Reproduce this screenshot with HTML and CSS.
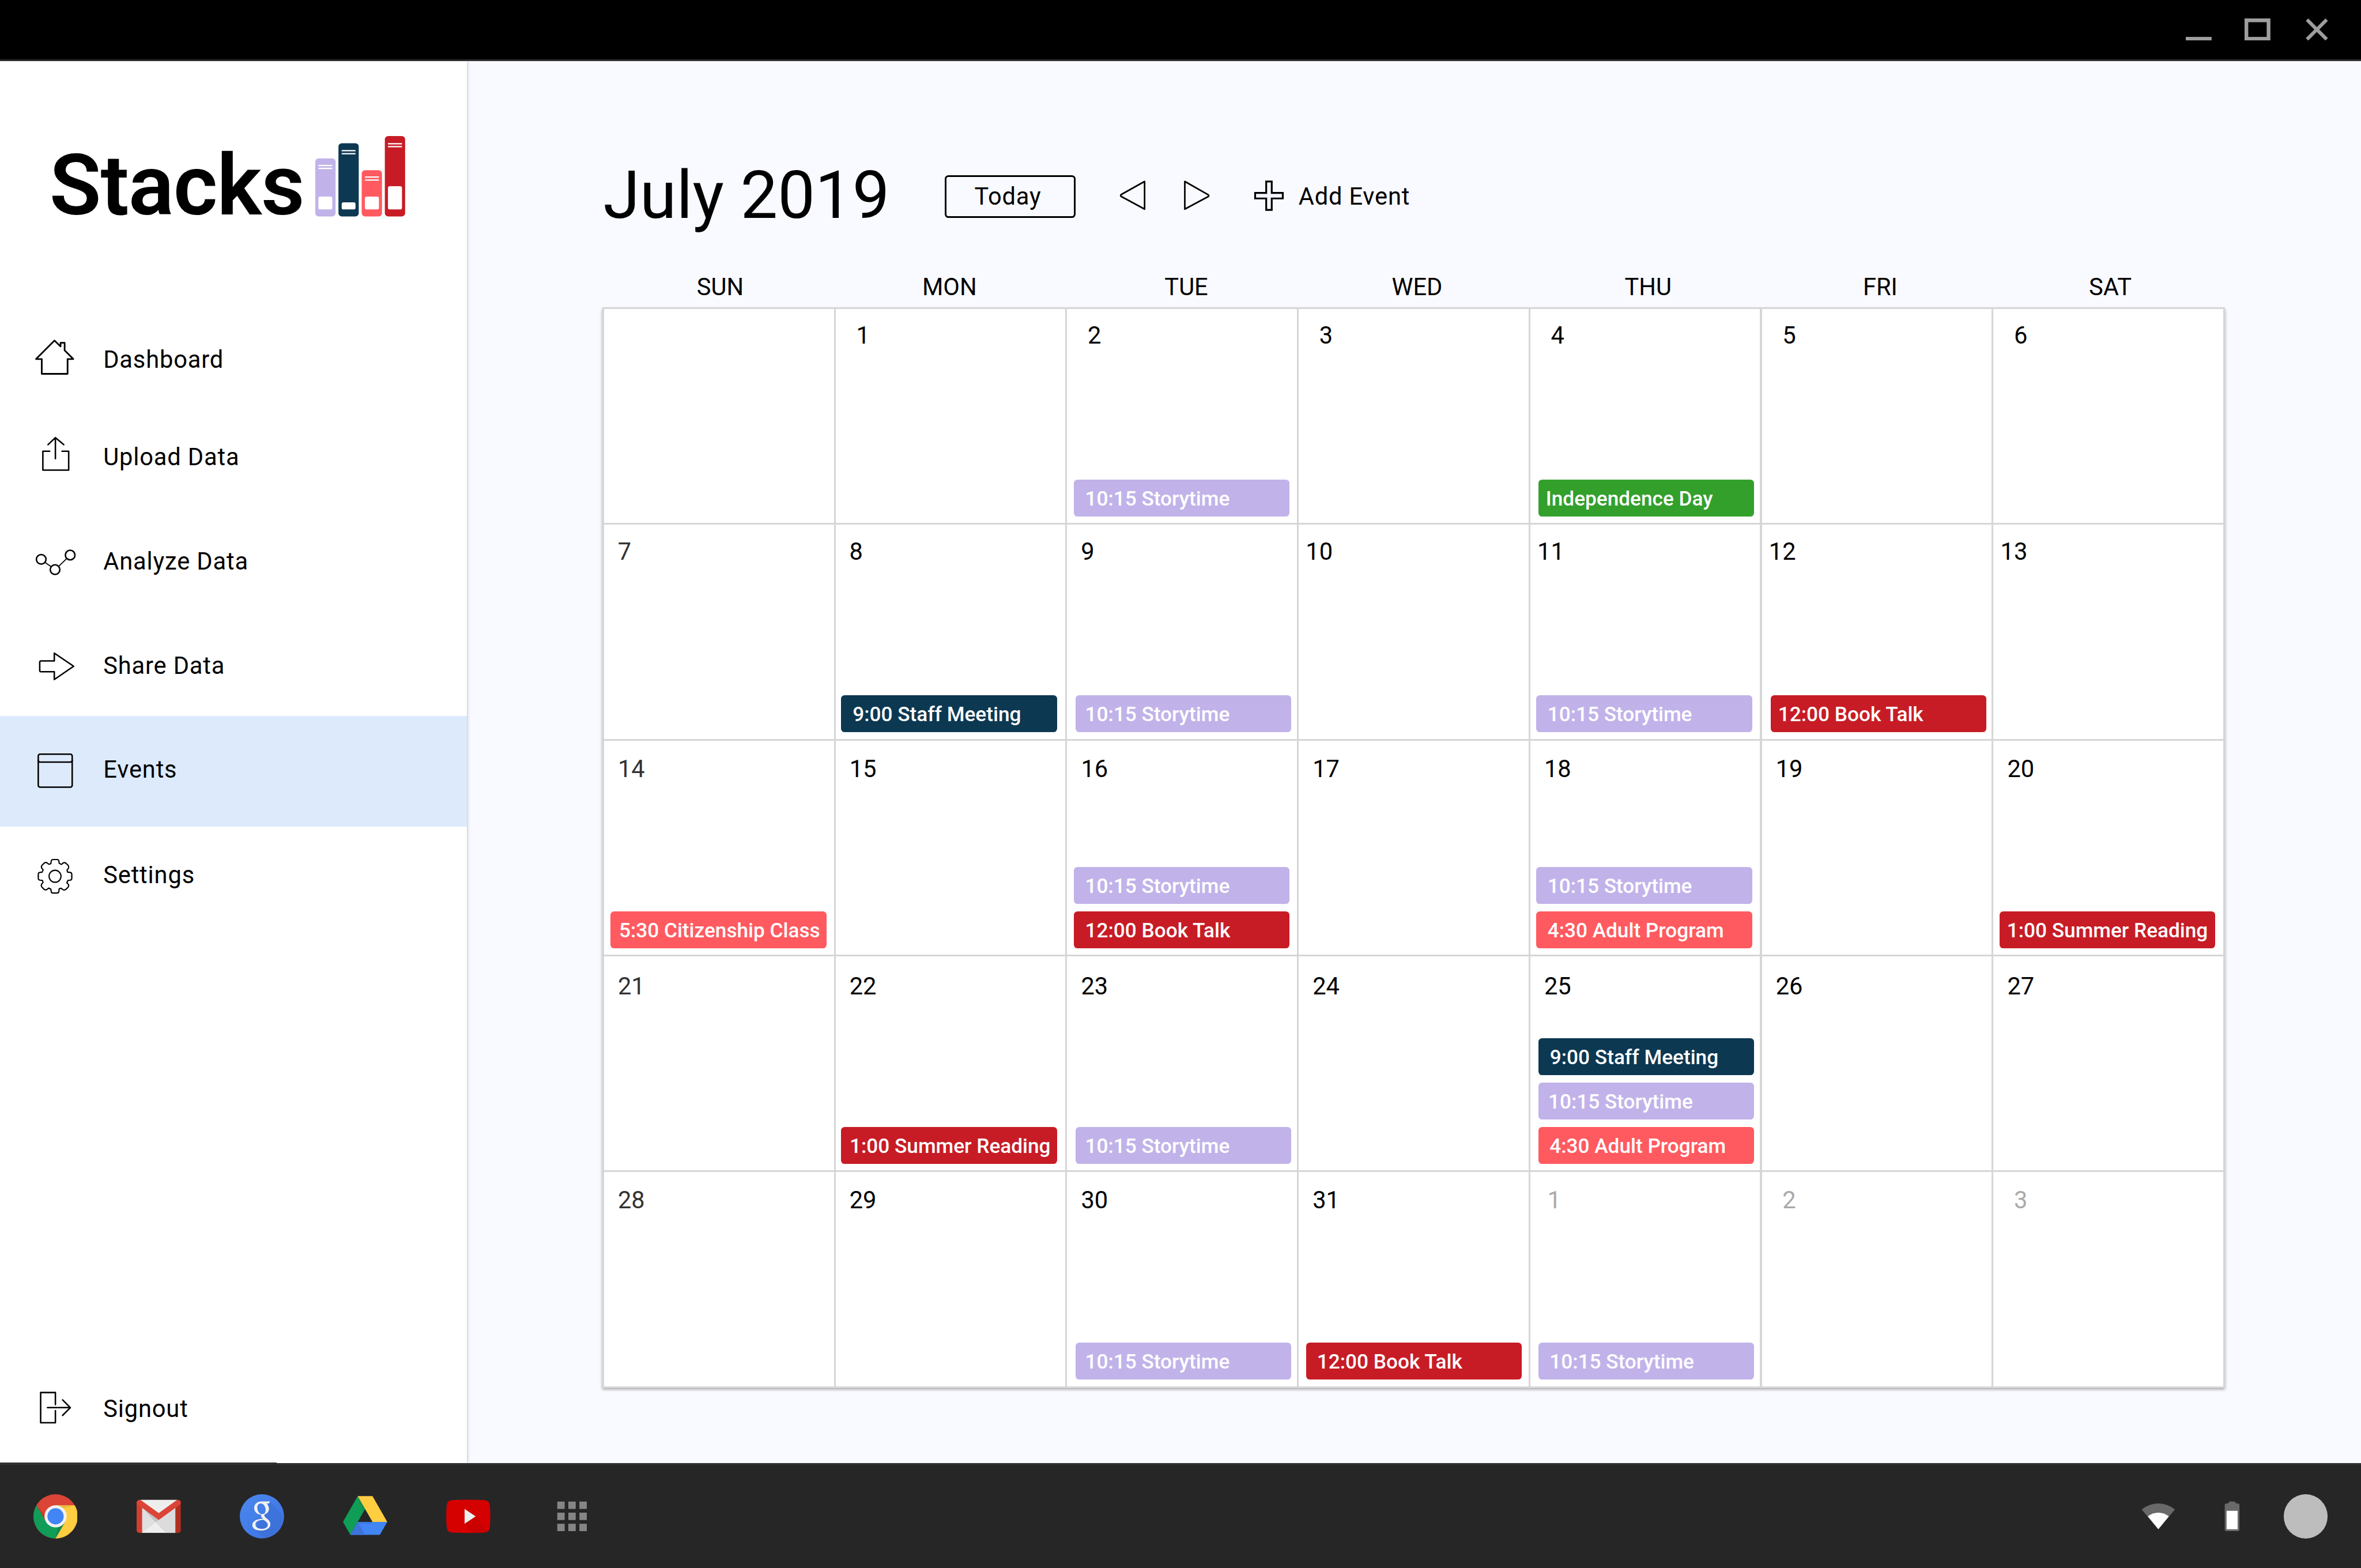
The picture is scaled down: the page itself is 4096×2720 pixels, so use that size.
FILE: index.html
```html
<!DOCTYPE html>
<html lang="en">
<head>
<meta charset="utf-8">
<title>Stacks – Events</title>
<link rel="stylesheet" href="styles.css">
</head>
<body>
<div class="desktop">
  <header class="titlebar">
    <svg class="win-btn" viewBox="0 0 14 12"><path d="M0 10h14v2H0z"/></svg>
    <svg class="win-btn" viewBox="0 0 14 12"><path fill-rule="evenodd" d="M0 0h14v12H0zM2 2v8h10V2z"/></svg>
    <svg class="win-btn" viewBox="0 0 14 12"><path d="M2.35 0 7 4.65 11.65 0 13 1.35 8.35 6 13 10.65 11.65 12 7 7.35 2.35 12 1 10.65 5.65 6 1 1.35z"/></svg>
  </header>

  <div class="app">
    <aside class="sidebar">
      <div class="logo">
        <span class="logo-text">Stacks</span>
        <svg class="logo-books" viewBox="0 0 48.8 43.6">
          <rect x="0" y="12.1" width="11" height="31.5" rx="1.8" fill="#c1b3e9"/>
          <rect x="12.55" y="3.9" width="11" height="39.7" rx="1.8" fill="#0c3852"/>
          <rect x="25.15" y="18.5" width="11" height="25.1" rx="1.8" fill="#ff5a60"/>
          <rect x="37.7" y="0" width="11" height="43.6" rx="1.8" fill="#c71c25"/>
          <g fill="#fff">
            <path d="M1.7 15.6h7.5v.7H1.7zm0 1.6h7.5v.7H1.7zM14.3 7.6h7.5v.7h-7.5zm0 1.6h7.5v.7h-7.5zM26.9 21.9h7.6v.7h-7.6zm0 1.6h7.6v.7h-7.6zM39.4 3.8H47v.7h-7.6zm0 1.6H47v.7h-7.6z"/>
            <rect x="1.7" y="32.8" width="7.5" height="7" rx="1"/>
            <rect x="14.3" y="35.9" width="7.5" height="3.9" rx="1"/>
            <rect x="26.9" y="32.8" width="7.6" height="7" rx="1"/>
            <rect x="39.4" y="27.2" width="7.6" height="12.6" rx="1"/>
          </g>
        </svg>
      </div>

      <nav class="nav">
        <a class="nav-item dashboard">
          <svg class="nav-icon" viewBox="0 0 28 28"><path stroke-width=".9" d="M13.6 3.7 3.6 13.7h3.1v8h14v-8h3.1L19.1 9V4.9h-2.2v2z"/></svg>
          Dashboard</a>
        <a class="nav-item upload">
          <svg class="nav-icon" viewBox="0 0 28 28"><path d="M11 11.2H7.3v10.2h14V11.2h-3.6M14.1 15.2V3.8M10.1 7.6l4-3.8 4.5 3.8"/></svg>
          Upload Data</a>
        <a class="nav-item analyze">
          <svg class="nav-icon" viewBox="0 0 28 28"><circle cx="6.4" cy="13.2" r="2.6"/><circle cx="13.9" cy="18.8" r="2.6"/><circle cx="22.1" cy="10.9" r="2.6"/><path stroke-width=".55" d="m8.5 14.9 3.2 2.2m4.1 0 4.3-4.2"/></svg>
          Analyze Data</a>
        <a class="nav-item share">
          <svg class="nav-icon" viewBox="0 0 28 28"><path d="M6.3 11.7h7.2V7.5L24 14.6l-10.5 7.2v-4.2H6.3q-.7 0-.7-.7v-4.5q0-.7.7-.7z"/></svg>
          Share Data</a>
        <a class="nav-item events active">
          <svg class="nav-icon" viewBox="0 0 28 28"><rect x="4.8" y="5.7" width="18.4" height="17.9" rx="1"/><path d="M4.8 9q0 1 1 1h16.4q1 0 1-1"/></svg>
          Events</a>
        <a class="nav-item settings">
          <svg class="nav-icon" viewBox="0 0 28 28">
            <g transform="translate(13.9 14.7) scale(.0833)" stroke-width="8">
              <circle r="39"/>
              <path id="cog" d="M0-109H14Q24-109 25-99L27-84 42-77 52-86Q62-92 71-85L85-71Q92-62 88-53L78-40 82-27 99-25Q109-23 109-13V0"/>
              <use href="#cog" transform="rotate(90)"/><use href="#cog" transform="rotate(180)"/><use href="#cog" transform="rotate(270)"/>
            </g>
          </svg>
          Settings</a>
      </nav>

      <a class="nav-item signout">
        <svg class="nav-icon" viewBox="0 0 28 28"><path d="M14.1 12V5.5H6.1v16.4h8v-6.6M9.8 13.7H22M18 9.5l4.2 4.2-4.2 4.2"/></svg>
        Signout</a>
    </aside>

    <main class="main">
      <div class="toolbar">
        <h1 class="month">July 2019</h1>
        <button class="today">Today</button>
        <svg class="arrow prev" viewBox="0 0 16 19"><path d="M14.6 1.5v15L1.9 9.6q-.6-.5 0-1z"/></svg>
        <svg class="arrow next" viewBox="0 0 16 19"><path d="M1.4 1.5v15l12.7-6.8q.6-.5 0-1z"/></svg>
        <svg class="plus" viewBox="0 0 18 19"><path d="M7.4 1.5h3v6.2h6v3h-6v6.2h-3v-6.2h-6v-3h6z"/></svg>
        <span class="add-event">Add Event</span>
      </div>

      <div class="weekdays">
        <span class="sun">SUN</span><span class="mon">MON</span><span class="tue">TUE</span><span class="wed">WED</span><span class="thu">THU</span><span class="fri">FRI</span><span class="sat">SAT</span>
      </div>

      <div class="calendar">
        <div class="week w1">
          <div class="day sunday"></div>
          <div class="day"><span class="num">1</span></div>
          <div class="day"><span class="num">2</span><div class="events-list m35"><div class="chip lavender">10:15 Storytime</div></div></div>
          <div class="day"><span class="num">3</span></div>
          <div class="day"><span class="num">4</span><div class="events-list m43"><div class="chip green p37">Independence Day</div></div></div>
          <div class="day"><span class="num">5</span></div>
          <div class="day"><span class="num">6</span></div>
        </div>
        <div class="week w2">
          <div class="day sunday"><span class="num">7</span></div>
          <div class="day"><span class="num">8</span><div class="events-list"><div class="chip navy">9:00 Staff Meeting</div></div></div>
          <div class="day"><span class="num">9</span><div class="events-list m43"><div class="chip lavender p50">10:15 Storytime</div></div></div>
          <div class="day"><span class="num">10</span></div>
          <div class="day"><span class="num">11</span><div class="events-list m33"><div class="chip lavender p58">10:15 Storytime</div></div></div>
          <div class="day"><span class="num">12</span><div class="events-list m48"><div class="chip red p37">12:00 Book Talk</div></div></div>
          <div class="day"><span class="num">13</span></div>
        </div>
        <div class="week w3">
          <div class="day sunday"><span class="num">14</span><div class="events-list m35"><div class="chip coral p43">5:30 Citizenship Class</div></div></div>
          <div class="day"><span class="num">15</span></div>
          <div class="day"><span class="num">16</span><div class="events-list m35"><div class="chip lavender">10:15 Storytime</div><div class="chip red">12:00 Book Talk</div></div></div>
          <div class="day"><span class="num">17</span></div>
          <div class="day"><span class="num">18</span><div class="events-list m33"><div class="chip lavender p58">10:15 Storytime</div><div class="chip coral p58">4:30 Adult Program</div></div></div>
          <div class="day"><span class="num">19</span></div>
          <div class="day"><span class="num">20</span><div class="events-list m33"><div class="chip red p37">1:00 Summer Reading</div></div></div>
        </div>
        <div class="week w4">
          <div class="day sunday"><span class="num">21</span></div>
          <div class="day"><span class="num">22</span><div class="events-list"><div class="chip red p43">1:00 Summer Reading</div></div></div>
          <div class="day"><span class="num">23</span><div class="events-list m43"><div class="chip lavender p50">10:15 Storytime</div></div></div>
          <div class="day"><span class="num">24</span></div>
          <div class="day"><span class="num">25</span><div class="events-list m43"><div class="chip navy">9:00 Staff Meeting</div><div class="chip lavender p50">10:15 Storytime</div><div class="chip coral p58">4:30 Adult Program</div></div></div>
          <div class="day"><span class="num">26</span></div>
          <div class="day"><span class="num">27</span></div>
        </div>
        <div class="week w5">
          <div class="day sunday"><span class="num">28</span></div>
          <div class="day"><span class="num">29</span></div>
          <div class="day"><span class="num">30</span><div class="events-list m43"><div class="chip lavender p50">10:15 Storytime</div></div></div>
          <div class="day"><span class="num">31</span><div class="events-list m38"><div class="chip red p58">12:00 Book Talk</div></div></div>
          <div class="day next-month first"><span class="num">1</span><div class="events-list m43"><div class="chip lavender p58">10:15 Storytime</div></div></div>
          <div class="day next-month"><span class="num">2</span></div>
          <div class="day next-month"><span class="num">3</span></div>
        </div>
      </div>
    </main>
  </div>

  <footer class="shelf">
    <svg class="app-icon" viewBox="0 0 24 24">
      <circle cx="12" cy="12" r="12" fill="#db4437"/>
      <path fill="#c53929" d="M1.65 6 6 13.6V11.2z"/>
      <path fill="#0f9d58" d="M1.65 6 6.8 15 12 18l5.2-3L12 24A12 12 0 0 1 1.65 6z"/>
      <path fill="#108a4d" d="M17.2 15 12 24l1.2-6.1z"/>
      <path fill="#ffcd40" d="M12 6h10.4A12 12 0 0 1 12 24l5.2-9z"/>
      <path fill="#e8ba3b" d="M12 6h10.4l-5.9 1.5z"/>
      <circle cx="12" cy="12" r="6" fill="#f1f1f1"/><circle cx="12" cy="12" r="4.4" fill="#4285f4"/>
    </svg>
    <svg class="app-icon" viewBox="0 0 24 24">
      <defs><clipPath id="mail"><rect y="3" width="24" height="18" rx="1.5"/></clipPath></defs>
      <g clip-path="url(#mail)">
        <path fill="#eee" d="M2 3h20v18H2z"/>
        <path fill="#dfdfdf" d="M3 7.3v13.6l7.3-5.6z"/>
        <path fill="#c4c4c4" d="M3 7.3 12 14l-1.7 1.3z"/>
        <path fill="#dcdcdc" d="m10.3 15.3 1.7-1.4 9-6.6V21h-5z"/>
        <path fill="#d23f31" d="M0 4h3v17H0z"/><path fill="#b03021" d="M21 4h3v17h-3z"/>
        <path fill="none" stroke="#db4437" stroke-width="3" stroke-linecap="round" d="M1.5 4.5 12 12.1l10.5-7.6"/>
      </g>
    </svg>
    <svg class="app-icon" viewBox="0 0 24 24">
      <defs><linearGradient id="sky" x2="1" y2="1"><stop offset="0" stop-color="#4c88ef"/><stop offset="1" stop-color="#3b72e0"/></linearGradient></defs>
      <circle cx="12" cy="12" r="12" fill="url(#sky)"/>
      <path fill="#3a6dd2" d="m16.3 4 7 7.2A11.5 11.5 0 0 1 13 23.5l-4.5-4.3z" opacity=".55"/>
      <g fill="#f1f1f1" fill-rule="evenodd">
        <path d="M11.9 3.9h4.5l-.6 1.1h-1.2C17.1 8 15.6 11.1 12 11.1 9.2 11.1 7.8 9.4 7.8 7.4 7.8 5.4 9.5 3.9 11.9 3.9zM11.4 5C9.9 5 9.4 6.3 9.5 7.6c.1 1.7 1.1 3.2 2.6 3.2 1.3 0 1.9-1 1.9-2.4C14 6.8 12.9 5 11.4 5z"/>
        <path d="M11.7 10.9h1.8c-.4.7-.1 1.2.6 1.8 1.3 1 2.5 1.9 2.5 3.6 0 1.9-2 3.4-5.3 3.4-2.8 0-4.5-1.2-4.5-2.9 0-2.2 2.4-3.4 5.9-3.5-.8-.7-1.5-1.2-1-2.4zM12.4 13.9c-2.4.1-3.9 1-3.9 2.5 0 1.4 1.4 2.4 3.5 2.4 2 0 3.2-.9 3.2-2.2 0-1.1-1-1.9-2.3-2.7z"/>
      </g>
    </svg>
    <svg class="app-icon" viewBox="0 0 24 24">
      <g transform="translate(0 1)">
        <path fill="#0f9d58" d="m8 0 4 7-8 14-4-7z"/><path fill="#11914f" d="m8 0 4 7-1.2 2.1z"/>
        <path fill="#ffcd40" d="M8 0h8l8 14h-8z"/>
        <path fill="#4285f4" d="M8 14h16l-4 7H4z"/><path fill="#3d74dc" d="m8 14 4 7H4z"/><path fill="#3c78de" d="M8 14h8l-.5 1h-7z"/>
      </g>
    </svg>
    <svg class="app-icon" viewBox="0 0 24 24">
      <path fill="#d50000" d="M3.2 3.2Q12 2.8 20.8 3.2 23.4 3.3 23.7 6 24.2 12 23.7 18q-.3 2.7-2.9 2.8-8.8.4-17.6 0Q.6 20.7.3 18-.2 12 .3 6 .6 3.3 3.2 3.2z"/>
      <path fill="#c40000" d="m10 16 6-4 6.5 7.8q-.8.9-1.7 1-3 .2-6 .2z" opacity=".6"/>
      <path fill="#eee" d="m10 8 6 4-6 4z"/>
    </svg>
    <svg class="app-icon" viewBox="0 0 24 24"><path fill="#858585" d="M4 4h4v4H4zm6 0h4v4h-4zm6 0h4v4h-4zM4 10h4v4H4zm6 0h4v4h-4zm6 0h4v4h-4zM4 16h4v4H4zm6 0h4v4h-4zm6 0h4v4h-4z"/></svg>

    <div class="status">
      <svg class="app-icon" viewBox="0 0 24 24"><path fill="#696969" d="M3 8.3Q7 5 12 5t9 3.3L12 19z"/><path fill="#fff" d="M6.3 12Q9 10 12 10t5.7 2L12 19z"/></svg>
      <svg class="app-icon" viewBox="0 0 24 24"><path fill="#696969" d="M9 5h1q0-1 1-1h2q1 0 1 1h1q1 0 1 1v13q0 1-1 1H9q-1 0-1-1V6q0-1 1-1z"/><path fill="#fff" d="M9 9h6v10H9z"/></svg>
      <span class="avatar"></span>
    </div>
  </footer>
</div>
</body>
</html>
```
FILE: styles.css
```css
/* 1rem = one density-independent pixel */
html { font-size: 3.2px; }
* { box-sizing: border-box; }
body {
  margin: 0;
  font-family: Roboto, "Liberation Sans", sans-serif;
  font-size: 13rem;
  color: #000;
  background: #f9faff;
}
svg { display: block; flex: none; }

.desktop { display: flex; flex-direction: column; width: 1280rem; height: 850rem; overflow: hidden; }

.titlebar {
  display: flex; flex: none; align-items: center; justify-content: flex-end;
  gap: 18rem; height: 33rem; padding-right: 17rem;
  background: #000; border-bottom: 1rem solid #303030;
}
.win-btn { width: 14rem; height: 12rem; fill: #9e9e9e; }

.app { display: flex; flex: 1; min-height: 0; background: #f9faff; }

/* Sidebar */
.sidebar {
  display: flex; flex: none; flex-direction: column;
  width: 253.25rem; box-shadow: 0 0 1.8rem rgba(0, 0, 0, .3);
  background: #fff linear-gradient(#303030, #303030) no-repeat left bottom / 150rem 1px;
}
.logo { display: flex; flex: none; align-items: flex-start; height: 135.2rem; padding: 40.9rem 0 0 26.8rem; }
.logo-text { width: 144.1rem; height: 54rem; line-height: 54rem; font-size: 46rem; font-weight: 600; letter-spacing: -.35rem; }
.logo-books { width: 48.8rem; height: 43.6rem; }

.nav-item {
  display: flex; flex: none; align-items: center; gap: 12rem;
  padding: .6rem 0 0 16rem; line-height: 15rem; letter-spacing: .27rem;
}
.nav-icon { width: 28rem; height: 28rem; margin-top: -.6rem; fill: none; stroke: #000; stroke-width: .8; stroke-linejoin: round; stroke-linecap: round; }
.dashboard { height: 53rem; padding-top: .8rem; }
.upload { height: 52.8rem; }
.analyze { height: 60.2rem; }
.share { height: 52.8rem; margin-bottom: 1rem; }
.events { height: 60rem; padding-bottom: 2rem; }
.active { background: #ddeafc; }
.settings { height: 52.4rem; }
.signout { height: 28.8rem; margin: auto 0 15.2rem; }

/* Main */
.main { flex: 1; padding: 55rem 0 0 73.75rem; }
.toolbar { display: flex; align-items: center; height: 37rem; }
.month { width: 185.1rem; margin: 0; padding-bottom: 1.6rem; font-size: 36rem; font-weight: 400; line-height: 36rem; white-space: nowrap; }
.today {
  width: 71rem; height: 23rem; padding: 0 2.4rem 0 0; border: 1rem solid #000; border-radius: 2rem;
  background: transparent; font: inherit; letter-spacing: .26rem; color: inherit;
}
.arrow { width: 16rem; height: 19rem; fill: none; stroke: #000; stroke-width: .85; stroke-linejoin: round; }
.prev { margin-left: 23rem; }
.next { margin-left: 19rem; }
.plus { width: 18rem; height: 19rem; margin-left: 22rem; fill: #f4f4ff; stroke: #000; stroke-width: 1; }
.add-event { margin-left: 6.9rem; letter-spacing: .26rem; }

.weekdays { display: grid; grid-template-columns: repeat(7, 125.54rem); height: 15rem; margin: 23rem 0 0 .2rem; line-height: 15.2rem; text-align: center; }
.sun { padding-left: 1rem; }
.mon { padding-right: 1.4rem; }
.tue { padding-left: 4.2rem; }
.wed { padding-left: 3.4rem; }
.thu { padding-left: 2.8rem; }
.fri { padding-left: 3.4rem; }
.sat { padding-left: 1.8rem; }

.calendar {
  display: grid; gap: 1rem; width: 879.8rem; margin: 3.5rem 0 0 -.5rem; padding: 1rem;
  background: #d6d6d6; box-shadow: 0 1rem 1.5rem rgba(0, 0, 0, .35);
}
.week { display: grid; grid-template-columns: repeat(7, 1fr); gap: 1rem; height: 116rem; }
.day { display: flex; flex-direction: column; justify-content: space-between; min-width: 0; padding-bottom: 3.5rem; background: #fff; }
.num { width: 29.6rem; line-height: 15rem; text-align: center; }
.sunday .num { color: #333; }
.next-month .num { color: #aaa; }
.first .num { width: 26rem; }
.w1 .day { padding-top: 6.9rem; }
.w2 .day { padding-top: 7.2rem; }
.w2 .num { width: 22.2rem; }
.w3 .day { padding-top: 8rem; }
.w4 .day { padding-top: 8.7rem; }
.w5 .day { padding-top: 7.8rem; }

.events-list { display: flex; flex-direction: column; gap: 4rem; width: 117rem; margin-left: 3rem; }
.m33 { margin-left: 3.3rem; }
.m35 { margin-left: 3.5rem; }
.m38 { margin-left: 3.9rem; }
.m43 { margin-left: 4.4rem; }
.m48 { margin-left: 4.8rem; }
.chip {
  height: 20rem; padding-left: 6.2rem; border-radius: 2rem; color: #fff;
  font-size: 11rem; font-weight: 500; line-height: 21rem; letter-spacing: 0; white-space: nowrap;
}
.p37 { padding-left: 4rem; }
.p43 { padding-left: 4.6rem; }
.p50 { padding-left: 5.3rem; }
.p58 { padding-left: 6rem; }
.lavender { background: #c1b3e9; }
.navy { background: #0c3852; }
.red { background: #c71c25; }
.coral { background: #ff5a60; }
.green { background: #33a02c; }

/* Shelf */
.shelf {
  display: flex; flex: none; align-items: center; gap: 32rem;
  height: 57rem; padding: 0 18rem; background: #262626; border-top: 1rem solid #303030;
}
.app-icon { width: 24rem; height: 24rem; }
.status { display: flex; gap: 16rem; margin-left: auto; }
.avatar { width: 24rem; height: 24rem; border-radius: 50%; background: #bdbdbd; }
```
